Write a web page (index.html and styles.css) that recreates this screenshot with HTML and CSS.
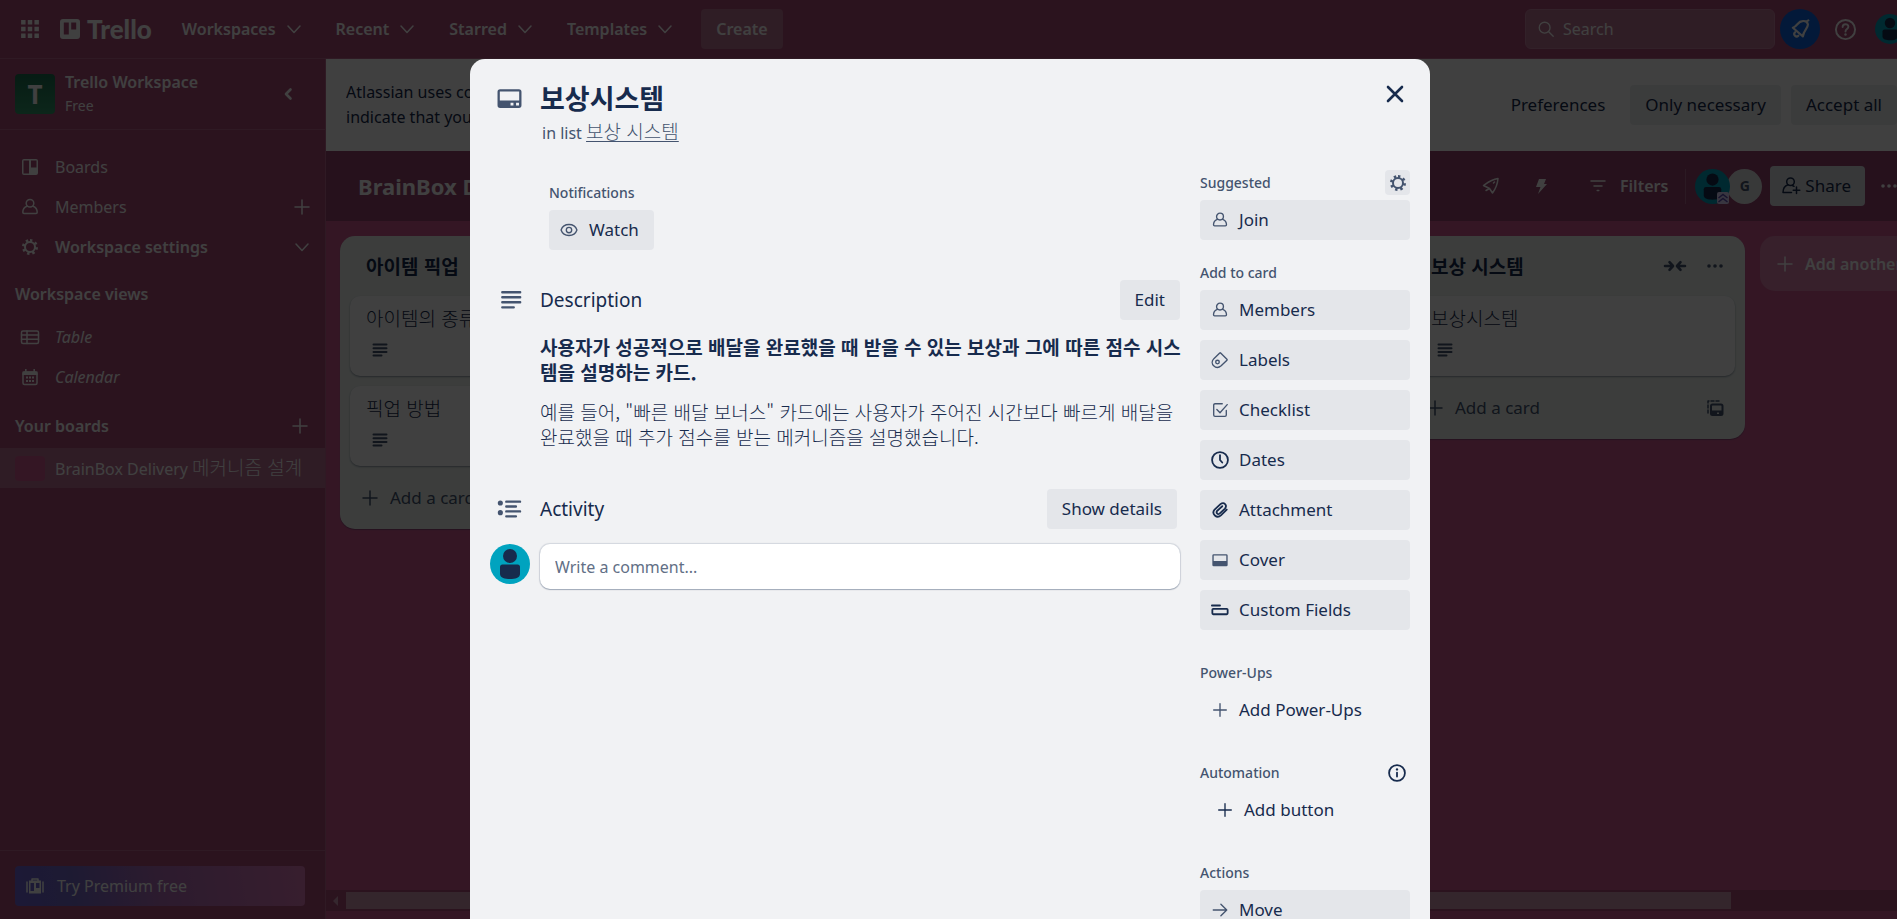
FILE: index.html
```html
<!DOCTYPE html>
<html lang="ko">
<head>
<meta charset="utf-8">
<title>보상시스템 | Trello</title>
<link rel="stylesheet" href="styles.css">
</head>
<body>
<svg class="sprite" aria-hidden="true">
  <symbol id="i-apps" viewBox="0 0 18 18"><path fill="currentColor" d="M1 1h4v4H1zM7 1h4v4H7zM13 1h4v4h-4zM1 7h4v4H1zM7 7h4v4H7zM13 7h4v4h-4zM1 13h4v4H1zM7 13h4v4H7zM13 13h4v4h-4z"/></symbol>
  <symbol id="i-logo" viewBox="0 0 20 20"><path fill="currentColor" fill-rule="evenodd" d="M3 0h14a3 3 0 0 1 3 3v14a3 3 0 0 1-3 3H3a3 3 0 0 1-3-3V3a3 3 0 0 1 3-3zm.8 3.500v12h5v-12zm7.400 0v7h5v-7z"/></symbol>
  <symbol id="i-down" viewBox="0 0 20 20"><path class="ln" d="M4 7l6 6.500L16 7"/></symbol>
  <symbol id="i-left" viewBox="0 0 20 20"><path class="ln heavy" d="M12.500 5.500l-4.500 4.500 4.500 4.500"/></symbol>
  <symbol id="i-board" viewBox="0 0 20 20"><path fill="currentColor" fill-rule="evenodd" d="M4 2h12a2 2 0 0 1 2 2v12a2 2 0 0 1-2 2H4a2 2 0 0 1-2-2V4a2 2 0 0 1 2-2zm-.5 1.500v13H9v-13zm7.500 0v7h5.500v-7z"/></symbol>
  <symbol id="i-member" viewBox="0 0 20 20"><circle class="ln" cx="10" cy="6.200" r="3.800"/><path class="ln" d="M7 9.300c-2.800 1-4.200 3.500-4.200 6 0 .8.500 1.200 1.200 1.200h12c.7 0 1.200-.4 1.200-1.200 0-2.500-1.400-5-4.200-6"/></symbol>
  <symbol id="i-gear" viewBox="0 0 20 20"><circle class="ln thick" cx="10" cy="10" r="5"/><path class="ln fat" stroke-dasharray="2.300 2.805" d="M10 3.500a6.500 6.500 0 1 1 0 13 6.500 6.500 0 0 1 0-13"/></symbol>
  <symbol id="i-plus" viewBox="0 0 20 20"><path class="ln" d="M10 3v14M3 10h14"/></symbol>
  <symbol id="i-table" viewBox="0 0 20 20"><rect class="ln" x="1.500" y="4" width="17" height="12.500" rx="1.500"/><path class="ln" d="M7 4v12.500M1.500 8h17M1.500 12.200h17"/></symbol>
  <symbol id="i-cal" viewBox="0 0 20 20"><rect class="ln" x="3" y="5" width="14" height="12.500" rx="1.500"/><path fill="currentColor" d="M2.500 4.500h15V8h-15zM5 2h1.600v3H5zM13.400 2H15v3h-1.600zM6 9.500h2v2H6zM9 9.500h2v2H9zM12 9.500h2v2h-2zM6 13h2v2H6zM9 13h2v2H9zM12 13h2v2h-2z"/></symbol>
  <symbol id="i-case" viewBox="0 0 20 20"><path class="ln" d="M2 6v10M18 6v10M7 5V3h6v2"/><path fill="currentColor" fill-rule="evenodd" d="M4 4.500h12v13H4zm1.500 2.500v8h3.500V7zm5.500 0v5h3.500V7z"/></symbol>
  <symbol id="i-search" viewBox="0 0 20 20"><circle class="ln" cx="8.500" cy="8.500" r="6"/><path class="ln" d="M13 13l5 5"/></symbol>
  <symbol id="i-bell" viewBox="0 0 24 24"><path class="ln heavy" d="M3.500 10.500C9 8.500 9.500 2.500 15 2.500c3.500-.5 6 1 6.500 4 0 5-5.500 7-6 14.500zM20.500 2.500l1.500-.8M6 16a2.800 2.800 0 0 0 4 4"/></symbol>
  <symbol id="i-help" viewBox="0 0 24 24"><circle class="ln thick" cx="12" cy="12" r="10"/><path class="ln thick" d="M9 9.500c0-4 6-4 6-.3 0 2.300-3 2.300-3 4.800"/><circle cx="12" cy="17.300" r="1.300" fill="currentColor"/></symbol>
  <symbol id="i-rocket" viewBox="0 0 20 20"><path class="ln" d="M2.500 9.500C6 7 10 3.500 17 2.500 16.500 8.500 14.500 13 11.500 17L8.500 12.500zM8.500 12.500l-3.500 2M13.500 6l-1 1"/></symbol>
  <symbol id="i-bolt" viewBox="0 0 20 20"><path fill="currentColor" d="M8 3h7l-2 5h3L7 18l2.500-7H5z"/></symbol>
  <symbol id="i-filter" viewBox="0 0 20 20"><path class="ln" d="M3 5h14M6 10h8M9.200 14.500h1.600"/></symbol>
  <symbol id="i-share" viewBox="0 0 20 20"><circle class="ln" cx="9.500" cy="5.800" r="3.800"/><path class="ln" d="M7 8.800C3.500 10 2 13 2 16.500h8.500M11.500 9.500l1.500.8M15.500 11v6.500M12.200 14.200h6.600"/></symbol>
  <symbol id="i-dots" viewBox="0 0 20 20"><g fill="currentColor"><circle cx="4" cy="10" r="1.800"/><circle cx="10" cy="10" r="1.800"/><circle cx="16" cy="10" r="1.800"/></g></symbol>
  <symbol id="i-collapse" viewBox="0 0 24 20"><path class="ln heavy" d="M2 10h7.500M6.500 6.200l3.500 3.800-3.500 3.800M22 10h-7.500M17.500 6.200L14 10l3.500 3.800"/></symbol>
  <symbol id="i-desc" viewBox="0 0 20 20"><path class="ln thick" d="M3.500 4.500h13M3.500 8.200h13M3.500 11.900h13M3.500 15.600h8"/></symbol>
  <symbol id="i-template" viewBox="0 0 20 20"><path class="ln" stroke-dasharray="3 2" d="M3 15V3h13"/><rect class="ln thick" x="6" y="6.500" width="11.500" height="10.500" rx="1.500"/><path fill="currentColor" d="M6 12.500h11.500V17h-3.500v-2.500h-2V17H6z"/></symbol>
  <symbol id="i-card" viewBox="0 0 24 24"><path fill="currentColor" fill-rule="evenodd" d="M3 3h18a2.500 2.500 0 0 1 2.500 2.500v13A2.500 2.500 0 0 1 21 21H3a2.500 2.500 0 0 1-2.500-2.500v-13A2.500 2.500 0 0 1 3 3zm-.3 2.200v8.600h18.600V5.200zm10.300 10.800v2.800h2.800v-2.800zm5.300 0v2.800h2.800v-2.800z"/></symbol>
  <symbol id="i-eye" viewBox="0 0 20 20"><path class="ln" d="M1.200 10C4 1.800 16 1.800 18.800 10 16 18.200 4 18.200 1.200 10z"/><circle class="ln" cx="10" cy="10" r="3"/></symbol>
  <symbol id="i-close" viewBox="0 0 20 20"><path class="ln heavy" d="M3 3l14 14M17 3L3 17"/></symbol>
  <symbol id="i-text" viewBox="0 0 24 24"><path class="ln heavy" d="M2.500 3.500h19.500M2.500 9h19.500M2.500 14.500h19.500M2.500 20h12.500"/></symbol>
  <symbol id="i-activity" viewBox="0 0 26 24"><g fill="currentColor"><circle cx="3" cy="5.500" r="2.800"/><circle cx="3" cy="16" r="2.800"/></g><path class="ln heavy" d="M9.500 4h15M9.500 9.300h10.500M9.500 14.600h15M9.500 20h10.500"/></symbol>
  <symbol id="i-avatar" viewBox="0 0 40 40"><circle cx="20" cy="20" r="20" fill="#00a3bf"/><circle cx="20" cy="12" r="7" fill="#172b4d"/><path fill="#172b4d" d="M12.500 20.500h15a2.500 2.500 0 0 1 2.500 2.500v7c0 4-5 5-10 5s-10-1-10-5v-7a2.500 2.500 0 0 1 2.500-2.500z"/></symbol>
  <symbol id="i-admin" viewBox="0 0 12 12"><rect width="12" height="12" rx="2" fill="#dfd8fd"/><path fill="none" stroke="#5e4db2" stroke-width="1.500" d="M1.500 6L6 2.500 10.500 6M1.500 10L6 6.500l4.500 3.500"/></symbol>
  <symbol id="i-label" viewBox="0 0 20 20"><path class="ln" d="M3.200 8.500l6.500-6.300q.5-.4 1 0l7 7q.5.500 0 1l-6.400 6.300c-6 5-13.500-2.500-8.100-8z"/><circle class="ln" cx="7.200" cy="12.300" r="2"/></symbol>
  <symbol id="i-check" viewBox="0 0 20 20"><path class="ln" d="M12.500 3H4.500A1.500 1.500 0 0 0 3 4.500v11A1.500 1.500 0 0 0 4.500 17h11a1.500 1.500 0 0 0 1.500-1.500v-5M6.500 9.500l3.500 3.500 8-9"/></symbol>
  <symbol id="i-clock" viewBox="0 0 20 20"><circle class="ln thick" cx="10" cy="10" r="8.800"/><path class="ln thick" d="M10 4.500V10l2.500 2.800"/></symbol>
  <symbol id="i-clip" viewBox="0 0 20 20"><path class="ln thick" d="M17.500 9.500l-6.500 6.500C6.500 20 0 14.500 4 9.500l6.500-6C14.500.5 18.500 4.500 15.500 8.500l-6 5.500c-2 1.500-4.500-1-2.500-3.200l5.500-5"/></symbol>
  <symbol id="i-cover" viewBox="0 0 20 20"><path fill="currentColor" fill-rule="evenodd" d="M3 3.500h14A1.500 1.500 0 0 1 18.500 5v10.500A1.500 1.500 0 0 1 17 17H3a1.500 1.500 0 0 1-1.500-1.500V5A1.500 1.500 0 0 1 3 3.500zM3 5v6h14V5z"/></symbol>
  <symbol id="i-fields" viewBox="0 0 20 20"><path class="ln thick" d="M1 5h9"/><rect class="ln thick" x="1.500" y="8.700" width="17" height="6" rx="1"/></symbol>
  <symbol id="i-info" viewBox="0 0 20 20"><circle class="ln thick" cx="10" cy="10" r="8.800"/><path class="ln thick" d="M10 9.500v4.500"/><circle cx="10" cy="6" r="1.300" fill="currentColor"/></symbol>
  <symbol id="i-right" viewBox="0 0 20 20"><path class="ln" d="M2.500 10h15M11 3.500l6.500 6.500-6.500 6.500"/></symbol>
</svg>

<div class="app">
  <header class="topbar">
    <button class="apps" aria-label="Apps"><svg class="icon"><use href="#i-apps"/></svg></button>
    <a class="logo" href="#"><svg class="icon"><use href="#i-logo"/></svg>Trello</a>
    <nav class="menus">
      <button>Workspaces<svg class="icon"><use href="#i-down"/></svg></button>
      <button>Recent<svg class="icon"><use href="#i-down"/></svg></button>
      <button>Starred<svg class="icon"><use href="#i-down"/></svg></button>
      <button>Templates<svg class="icon"><use href="#i-down"/></svg></button>
    </nav>
    <button class="create">Create</button>
    <div class="search"><svg class="icon"><use href="#i-search"/></svg><input type="text" placeholder="Search" aria-label="Search"></div>
    <button class="bell" aria-label="Notifications"><svg class="icon"><use href="#i-bell"/></svg></button>
    <button class="help" aria-label="Help"><svg class="icon"><use href="#i-help"/></svg></button>
    <button class="me" aria-label="Account"><svg class="icon"><use href="#i-avatar"/></svg></button>
  </header>

  <div class="body">
    <aside class="sidebar">
      <div class="workspace">
        <span class="badge">T</span>
        <div class="wsname"><strong>Trello Workspace</strong><span>Free</span></div>
        <button aria-label="Collapse sidebar"><svg class="icon"><use href="#i-left"/></svg></button>
      </div>
      <nav class="links">
        <a href="#"><svg class="icon"><use href="#i-board"/></svg><span>Boards</span></a>
        <a href="#"><svg class="icon"><use href="#i-member"/></svg><span>Members</span><svg class="icon"><use href="#i-plus"/></svg></a>
        <a href="#" class="strong"><svg class="icon"><use href="#i-gear"/></svg><span>Workspace settings</span><svg class="icon"><use href="#i-down"/></svg></a>
        <h2 class="views">Workspace views</h2>
        <a href="#" class="view"><svg class="icon"><use href="#i-table"/></svg><span>Table</span></a>
        <a href="#" class="view"><svg class="icon"><use href="#i-cal"/></svg><span>Calendar</span></a>
        <h2 class="boards">Your boards<svg class="icon"><use href="#i-plus"/></svg></h2>
        <a href="#" class="current"><i class="thumb"></i><span>BrainBox Delivery <span class="ko">메커니즘 설계</span></span></a>
      </nav>
      <div class="promo"><button><svg class="icon"><use href="#i-case"/></svg>Try Premium free</button></div>
    </aside>

    <main class="main">
      <section class="cookies">
        <p>Atlassian uses cookies to improve your browsing experience,<br>indicate that you accept our use of cookies on your device.</p>
        <button class="plain">Preferences</button>
        <button>Only necessary</button>
        <button>Accept all</button>
      </section>
      <div class="boardbar">
        <h1>BrainBox Delivery</h1>
        <button class="tool" aria-label="Power-Ups"><svg class="icon"><use href="#i-rocket"/></svg></button>
        <button class="tool" aria-label="Automation"><svg class="icon"><use href="#i-bolt"/></svg></button>
        <button class="filters"><svg class="icon"><use href="#i-filter"/></svg>Filters</button>
        <div class="people">
          <span class="face"><svg class="icon"><use href="#i-avatar"/></svg><svg class="admin"><use href="#i-admin"/></svg></span>
          <span class="initial">G</span>
        </div>
        <button class="share"><svg class="icon"><use href="#i-share"/></svg>Share</button>
        <button class="more" aria-label="Menu"><svg class="icon"><use href="#i-dots"/></svg></button>
      </div>
      <div class="lists">
        <section class="list">
          <h2 class="ko">아이템 픽업</h2>
          <article class="card"><p class="ko">아이템의 종류</p><svg class="icon"><use href="#i-desc"/></svg></article>
          <article class="card"><p class="ko">픽업 방법</p><svg class="icon"><use href="#i-desc"/></svg></article>
          <button class="addcard"><svg class="icon"><use href="#i-plus"/></svg>Add a card</button>
        </section>
        <section class="list"></section>
        <section class="list"></section>
        <section class="list">
          <h2 class="ko"><span>보상 시스템</span><svg class="icon wide"><use href="#i-collapse"/></svg><svg class="icon"><use href="#i-dots"/></svg></h2>
          <article class="card"><p class="ko">보상시스템</p><svg class="icon"><use href="#i-desc"/></svg></article>
          <button class="addcard"><svg class="icon"><use href="#i-plus"/></svg><span>Add a card</span><svg class="icon"><use href="#i-template"/></svg></button>
        </section>
        <button class="addlist"><svg class="icon"><use href="#i-plus"/></svg>Add another list</button>
      </div>
      <div class="scroller"><i class="arrow"></i><i class="grip"></i></div>
    </main>
  </div>
</div>

<div class="overlay">
  <div class="dialog" role="dialog" aria-labelledby="card-title">
    <header class="dhead">
      <svg class="icon"><use href="#i-card"/></svg>
      <div class="dtitle">
        <h2 class="ko" id="card-title">보상시스템</h2>
        <p>in list <a href="#" class="ko">보상 시스템</a></p>
      </div>
      <button class="close" aria-label="Close"><svg class="icon"><use href="#i-close"/></svg></button>
    </header>
    <div class="dbody">
      <div class="dmain">
        <section class="notify">
          <h3>Notifications</h3>
          <button class="btn watch"><svg class="icon"><use href="#i-eye"/></svg>Watch</button>
        </section>
        <section>
          <div class="shead"><svg class="icon"><use href="#i-text"/></svg><h3>Description</h3><button class="btn">Edit</button></div>
          <div class="desc ko">
            <p><strong>사용자가 성공적으로 배달을 완료했을 때 받을 수 있는 보상과 그에 따른 점수 시스템을 설명하는 카드.</strong></p>
            <p>예를 들어, "빠른 배달 보너스" 카드에는 사용자가 주어진 시간보다 빠르게 배달을 완료했을 때 추가 점수를 받는 메커니즘을 설명했습니다.</p>
          </div>
        </section>
        <section>
          <div class="shead activity"><svg class="icon"><use href="#i-activity"/></svg><h3>Activity</h3><button class="btn">Show details</button></div>
          <div class="comment"><svg class="icon"><use href="#i-avatar"/></svg><input type="text" placeholder="Write a comment..." aria-label="Write a comment"></div>
        </section>
      </div>
      <aside class="dside">
        <section class="first">
          <h3>Suggested<button class="cog" aria-label="Settings"><svg class="icon"><use href="#i-gear"/></svg></button></h3>
          <button class="btn"><svg class="icon"><use href="#i-member"/></svg>Join</button>
        </section>
        <section>
          <h3>Add to card</h3>
          <button class="btn"><svg class="icon"><use href="#i-member"/></svg>Members</button>
          <button class="btn"><svg class="icon"><use href="#i-label"/></svg>Labels</button>
          <button class="btn"><svg class="icon"><use href="#i-check"/></svg>Checklist</button>
          <button class="btn dark"><svg class="icon"><use href="#i-clock"/></svg>Dates</button>
          <button class="btn dark"><svg class="icon"><use href="#i-clip"/></svg>Attachment</button>
          <button class="btn"><svg class="icon"><use href="#i-cover"/></svg>Cover</button>
          <button class="btn dark"><svg class="icon"><use href="#i-fields"/></svg>Custom Fields</button>
        </section>
        <section>
          <h3>Power-Ups</h3>
          <button class="btn ghost"><svg class="icon"><use href="#i-plus"/></svg>Add Power-Ups</button>
        </section>
        <section>
          <h3>Automation<svg class="icon info"><use href="#i-info"/></svg></h3>
          <button class="btn ghost dark inset"><svg class="icon"><use href="#i-plus"/></svg>Add button</button>
        </section>
        <section>
          <h3>Actions</h3>
          <button class="btn"><svg class="icon"><use href="#i-right"/></svg>Move</button>
        </section>
      </aside>
    </div>
  </div>
</div>
</body>
</html>
```

FILE: styles.css
```css
* { box-sizing: border-box; }
body {
  margin: 0;
  height: 100vh;
  overflow: hidden;
  font: 16px/20px "Noto Sans", "Noto Sans CJK KR", sans-serif;
  color: #172b4d;
  background: #cd5a91;
}
h1, h2, h3, p { margin: 0; font-size: inherit; font-weight: inherit; }
button, input { font: inherit; color: inherit; border: 0; background: none; padding: 0; margin: 0; }
a { color: inherit; text-decoration: none; }
.sprite { position: absolute; width: 0; height: 0; }
.icon { width: 20px; height: 20px; flex: none; display: block; }
.ln { fill: none; stroke: currentColor; stroke-width: 1.5; stroke-linecap: round; stroke-linejoin: round; }
.thick { stroke-width: 2; }
.heavy { stroke-width: 2.6; }
.fat { stroke-width: 3; stroke-linecap: butt; }
.ko { font-family: "Noto Sans CJK KR", "Noto Sans", sans-serif; font-size: 19px; font-weight: 300; }

/* page */
.app { width: calc(100% + 15px); height: 100%; display: flex; flex-direction: column; isolation: isolate; }
.topbar {
  height: 59px; flex: none; display: flex; align-items: center;
  padding: 0 7px 0 20px; background: #ac4c78; color: #fff;
  border-bottom: 1px solid #bd6891;
}
.logo { display: flex; align-items: center; gap: 7px; margin-left: 20px; font: 900 26px/30px Lato, sans-serif; }
.menus { display: flex; gap: 32px; margin-left: 30px; font-weight: 600; }
.menus button { display: flex; align-items: center; gap: 8px; }
.create { height: 40px; padding: 0 15px; margin-left: 26px; border-radius: 4px; background: #bd7393; font-weight: 600; }
.search {
  width: 250px; height: 40px; margin-left: auto; padding: 0 11px; display: flex; align-items: center; gap: 8px;
  border: 1px solid #c583a2; border-radius: 6px; background: #bd7393;
}
.search .icon { width: 18px; height: 18px; }
.search input { flex: 1; min-width: 0; }
.search input::placeholder { color: #fff; opacity: 1; }
.bell { width: 40px; height: 40px; margin-left: 5px; border-radius: 50%; background: #0c66e4; display: grid; place-items: center; }
.help { margin-left: 14px; }
.help .icon { width: 23px; height: 23px; }
.me { margin-left: 18px; }
.me .icon { width: 30px; height: 30px; }

.body { flex: 1; min-height: 0; display: flex; }
.sidebar { width: 326px; flex: none; display: flex; flex-direction: column; background: #ac4c78; color: #fff; border-right: 1px solid #bd6891; }
.workspace { height: 71px; flex: none; display: flex; align-items: center; gap: 10px; padding: 0 27px 0 15px; border-bottom: 1px solid #bd6891; }
.badge { width: 40px; height: 40px; border-radius: 4px; background: linear-gradient(#1c6e50, #32986a); display: grid; place-items: center; font-size: 26px; font-weight: 700; }
.wsname { flex: 1; display: flex; flex-direction: column; gap: 4px; }
.wsname strong { font-weight: 600; }
.wsname span { font-size: 14px; }
.links { padding-top: 17px; }
.links a { height: 40px; display: flex; align-items: center; gap: 15px; padding: 0 13px 0 20px; }
.links a > span { flex: 1; white-space: nowrap; }
.links .strong, .links h2 { font-weight: 600; }
.links h2 { height: 40px; display: flex; align-items: center; justify-content: space-between; padding: 0 15px; }
.links .views { margin-top: 7px; margin-bottom: 3px; }
.links .boards { margin-top: 9px; margin-bottom: 2px; }
.view span { font-style: italic; }
.links .current { background: rgba(255, 255, 255, .2); padding: 0 15px; gap: 10px; }
.thumb { width: 30px; height: 25px; border-radius: 4px; background: #cd5a91; }
.promo { margin-top: auto; padding: 15px 20px 13px 15px; border-top: 1px solid #bd6891; }
.promo button { width: 100%; height: 40px; display: flex; align-items: center; gap: 12px; padding: 0 10px; border-radius: 4px; background: linear-gradient(80deg, #7064d8, #7468c8 20%, #b06cb8 50%, #dc78b8); }

.main { flex: 1; min-width: 0; display: flex; flex-direction: column; }
.cookies { height: 92px; flex: none; display: flex; align-items: center; gap: 10px; padding: 0 15px 0 20px; background: #fff; }
.cookies p { flex: 1; line-height: 25px; white-space: nowrap; overflow: hidden; }
.cookies button { height: 40px; padding: 0 15px; border-radius: 4px; background: #ecedf0; font-size: 17px; }
.cookies .plain { background: none; }
.boardbar { height: 70px; flex: none; display: flex; align-items: center; padding: 0 5px 0 32px; background: #984470; color: #fff; }
.boardbar h1 { flex: 1; font-size: 22px; font-weight: 700; }
.tool { margin-right: 30px; }
.filters { display: flex; align-items: center; gap: 12px; margin-left: 7px; font-weight: 600; }
.people { display: flex; margin-left: 17px; padding-left: 9px; border-left: 1px solid #ad6a8d; }
.face { position: relative; width: 32px; height: 35px; z-index: 1; }
.face .icon { width: 35px; height: 35px; }
.admin { position: absolute; right: -2px; bottom: 0; width: 12px; height: 12px; }
.initial { width: 35px; height: 35px; border-radius: 50%; background: #e0e2e4; color: #44546f; display: grid; place-items: center; font-size: 14px; font-weight: 700; }
.share { height: 40px; display: flex; align-items: center; gap: 4px; margin-left: 8px; padding: 0 14px 0 11px; border-radius: 4px; background: #dcdfe4; color: #172b4d; font-size: 17px; }
.more { width: 38px; margin-left: 4px; padding-left: 10px; }
.lists { flex: 1; min-height: 0; display: flex; align-items: flex-start; gap: 15px; padding: 15px 14px; overflow: hidden; }
.list { width: 340px; flex: none; padding: 10px; border-radius: 15px; background: #eef4f0; display: flex; flex-direction: column; gap: 10px; box-shadow: 0 1px 1px rgba(9, 30, 66, .3); }
.list h2 { height: 40px; display: flex; align-items: center; gap: 18px; padding: 0 10px 0 16px; font-weight: 700; color: #172b4d; }
.list h2 span { flex: 1; }
.wide { width: 24px; }
.list .icon { color: #44546f; }
.card { height: 80px; padding: 11px 16px; border-radius: 10px; background: #fff; box-shadow: 0 1px 2px rgba(9, 30, 66, .4); }
.card p { line-height: 22px; margin-bottom: 11px; }
.card .icon { margin-left: 4px; }
.addcard { height: 43px; display: flex; align-items: center; gap: 10px; padding: 0 10px; color: #44546f; font-size: 17px; text-align: left; }
.addcard span { flex: 1; }
.addlist { width: 340px; height: 55px; flex: none; display: flex; align-items: center; gap: 10px; padding: 0 15px; border-radius: 15px; background: rgba(255, 255, 255, .24); color: #fff; font-weight: 600; }
.scroller { height: 21px; flex: none; margin: 0 15px 8px 0; display: flex; align-items: center; gap: 8px; padding: 2px 166px 2px 7px; background: #ac4c78; }
.arrow { border: 5px solid transparent; border-left: 0; border-right-color: #d29bb6; }
.grip { flex: 1; height: 17px; background: #d098b0; }

/* card dialog */
.overlay { position: fixed; inset: 0; display: flex; justify-content: center; align-items: flex-start; padding: 59px 0 0 3px; background: rgba(0, 0, 0, .75); overflow: hidden; }
.dialog { width: 960px; flex: none; padding: 20px 20px 60px; border-radius: 15px; background: #f1f2f4; }
.dhead { display: flex; align-items: flex-start; padding: 0 0 0 7px; color: #44546f; }
.dhead > .icon { width: 25px; height: 25px; margin-top: 7px; }
.dtitle { flex: 1; padding: 4px 0 0 18px; }
.dtitle h2 { font-size: 27px; line-height: 30px; font-weight: 700; color: #172b4d; }
.dtitle p { margin-top: 7px; padding-left: 2px; line-height: 22px; }
.dtitle p a { text-decoration: underline; text-underline-offset: 2px; }
.close { width: 30px; height: 30px; display: grid; place-items: center; color: #172b4d; }
.dbody { display: flex; gap: 20px; padding-top: 26px; }
.dmain { flex: 1; min-width: 0; }
.dmain section { margin-bottom: 40px; }
.dmain .notify { margin: 0 0 30px 59px; padding-top: 10px; }
.notify h3, .dside h3 { font-size: 14px; font-weight: 500; color: #44546f; }
.notify h3 { height: 25px; line-height: 25px; margin-bottom: 5px; }
.btn { height: 40px; display: flex; align-items: center; gap: 10px; padding: 0 15px; border-radius: 4px; background: #e4e6ea; color: #172b4d; font-size: 17px; }
.btn .icon { color: #44546f; width: 18px; height: 18px; }
.dark .icon { color: #172b4d; }
.watch { padding-left: 11px; gap: 11px; }
.shead { display: flex; align-items: center; padding-left: 9px; }
.shead > .icon { width: 24px; height: 22px; color: #44546f; }
.shead h3 { flex: 1; padding-left: 17px; font-size: 19px; }
.activity { padding: 0 3px 0 6px; }
.activity > .icon { width: 27px; }
.desc { padding: 14px 0 0 50px; margin-right: -4px; line-height: 25px; }
.desc p + p { margin-top: 15px; }
.desc strong { font-weight: 700; }
.comment { display: flex; gap: 10px; margin-top: 15px; }
.comment .icon { width: 40px; height: 40px; }
.comment input { flex: 1; height: 45px; padding: 0 15px; border-radius: 10px; background: #fff; box-shadow: 0 1px 1px rgba(9, 30, 66, .25), 0 0 1px 1px rgba(9, 30, 66, .13); }
.comment input::placeholder { color: #626f86; opacity: 1; }
.dside { width: 210px; flex: none; }
.dside section { display: flex; flex-direction: column; gap: 10px; margin-bottom: 30px; }
.dside .first { margin-bottom: 20px; }
.dside h3 { height: 25px; display: flex; align-items: center; justify-content: space-between; margin-bottom: -5px; }
.dside .btn { padding: 0 11px; text-align: left; }
.cog { width: 25px; height: 25px; display: grid; place-items: center; border-radius: 4px; background: #e4e6ea; }
.info { width: 18px; height: 18px; margin-right: 4px; color: #172b4d; }
.dside .ghost { background: none; }
.dside .inset { padding-left: 16px; }
```
